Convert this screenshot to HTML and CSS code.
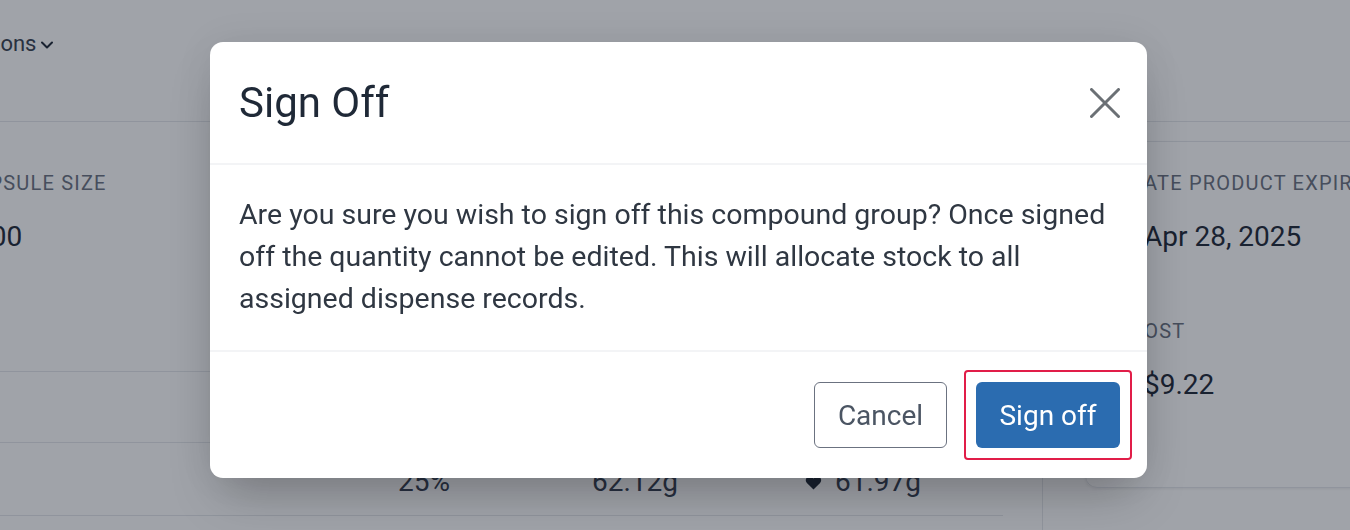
FILE: index.html
```html
<!DOCTYPE html>
<html lang="en">
<head>
<meta charset="utf-8">
<title>Sign Off</title>
<link rel="stylesheet" href="styles.css">
</head>
<body>
<div class="page">
  <header class="topbar">
    <span class="menu">Actions
      <svg class="chev" width="12" height="8" viewBox="0 0 12 8"><path d="M1 1.5 L6 6.5 L11 1.5" fill="none" stroke="currentColor" stroke-width="2" stroke-linecap="round" stroke-linejoin="round"/></svg>
    </span>
  </header>
  <div class="main">
    <section class="content">
      <div class="stats">
        <div class="stat">
          <div class="label">Capsule size</div>
          <div class="value">000</div>
        </div>
      </div>
      <div class="row head"></div>
      <div class="row data">
        <span>25%</span>
        <span>62.12g</span>
        <span class="with-icon">
          <svg width="17" height="17" viewBox="0 0 16 16"><path d="M8 14.5 L1.8 8.4 C0 6.6 0.6 3.2 3.3 2.4 C5.2 1.9 6.9 2.8 8 4.3 C9.1 2.8 10.8 1.9 12.7 2.4 C15.4 3.2 16 6.6 14.2 8.4 Z" fill="currentColor"/></svg>
          61.97g
        </span>
      </div>
    </section>
    <aside class="aside">
      <div class="card">
        <div class="stat">
          <div class="label">Date product expiry</div>
          <div class="value">Apr 28, 2025</div>
        </div>
        <div class="stat">
          <div class="label">Cost</div>
          <div class="value">$9.22</div>
        </div>
      </div>
    </aside>
  </div>
</div>

<div class="backdrop">
  <div class="modal" role="dialog" aria-labelledby="modal-title">
    <div class="modal-header">
      <h2 id="modal-title">Sign Off</h2>
      <button class="close" aria-label="Close">
        <svg width="30" height="30" viewBox="0 0 30 30"><path d="M1.5 1.5 L28.5 28.5 M28.5 1.5 L1.5 28.5" stroke="#6b7075" stroke-width="3" stroke-linecap="round"/></svg>
      </button>
    </div>
    <div class="modal-body">
      <p>Are you sure you wish to sign off this compound group? Once signed off the quantity cannot be edited. This will allocate stock to all assigned dispense records.</p>
    </div>
    <div class="modal-footer">
      <button class="btn btn-outline">Cancel</button>
      <span class="focus-ring"><button class="btn btn-primary">Sign off</button></span>
    </div>
  </div>
</div>
</body>
</html>
```
FILE: styles.css
```css
* { box-sizing: border-box; }

html, body {
  margin: 0;
  height: 530px;
  overflow: hidden;
  background: #ffffff;
  font-family: Roboto, "Liberation Sans", Arial, sans-serif;
}

/* ---------- underlying page ---------- */
.page { width: 1350px; }

.topbar {
  height: 122px;
  border-bottom: 1px solid #e5e7eb;
  padding-top: 31px;
}

.menu {
  display: inline-flex;
  align-items: center;
  gap: 5px;
  margin-left: -38px;
  font-size: 22px;
  line-height: 26px;
  color: #374151;
}

.chev { color: #1f2937; margin-top: 2px; }

.main {
  display: flex;
  height: 408px;
}

.content {
  flex: 0 0 1081px;
  margin-left: -39px;
  padding-right: 39px;
}

.stats {
  height: 250px;
  padding-top: 49px;
  border-bottom: 1px solid #e5e7eb;
}

.stat .label {
  font-size: 20px;
  line-height: 24px;
  letter-spacing: 1.2px;
  text-transform: uppercase;
  color: #6b7280;
  white-space: nowrap;
}

.stat .value {
  margin-top: 24px;
  padding-left: 14px;
  font-size: 28px;
  line-height: 36px;
  color: #1f2937;
  white-space: nowrap;
}

.row { border-bottom: 1px solid #e5e7eb; }
.row.head { height: 71px; }
.row.data {
  height: 73px;
  display: grid;
  grid-template-columns: 194px 213px 1fr;
  align-items: center;
  padding: 6px 0 0 437px;
  font-size: 28px;
  line-height: 32px;
  color: #374151;
}

.with-icon {
  display: inline-flex;
  align-items: center;
  gap: 13px;
}

.with-icon svg { color: #1f2937; }

.aside {
  flex: 1;
  border-left: 1px solid #e5e7eb;
  padding: 19px 0 0 42px;
}

.card {
  width: 400px;
  height: 347px;
  border: 1px solid #e5e7eb;
  border-radius: 12px;
  box-shadow: 0 1px 3px rgba(0, 0, 0, 0.08);
  padding: 29px 0 0 44px;
}

.card .stat + .stat { margin-top: 64px; }

/* ---------- modal ---------- */
.backdrop {
  position: fixed;
  inset: 0;
  background: rgba(17, 24, 39, 0.4);
  padding: 42px 0 0 210px;
}

.modal {
  width: 937px;
  background: #ffffff;
  border-radius: 13px;
  box-shadow: 0 25px 50px -12px rgba(0, 0, 0, 0.25), 0 0 40px rgba(0, 0, 0, 0.06);
}

.modal-header {
  height: 123px;
  display: flex;
  align-items: center;
  justify-content: space-between;
  padding: 0 27px 0 29px;
  border-bottom: 2px solid #f3f4f6;
}

.modal-header h2 {
  margin: 0;
  font-size: 42px;
  font-weight: 400;
  line-height: 50px;
  color: #1f2937;
}

.close {
  width: 30px;
  height: 30px;
  padding: 0;
  border: 0;
  background: none;
  display: flex;
}

.modal-body {
  padding: 29px 35px 30px 29px;
  border-bottom: 2px solid #f3f4f6;
}

.modal-body p {
  margin: 0;
  font-size: 28.5px;
  line-height: 42px;
  color: #2f3742;
}

.modal-footer {
  height: 126px;
  display: flex;
  align-items: center;
  justify-content: flex-end;
  gap: 17px;
  padding: 0 15px 0 0;
}

.btn {
  height: 66px;
  font-family: inherit;
  font-size: 28px;
  font-weight: 400;
  border-radius: 6px;
  padding: 0;
  cursor: pointer;
}

.btn-outline {
  width: 133px;
  background: #ffffff;
  border: 1.5px solid #6b7280;
  color: #4b5563;
}

.focus-ring {
  display: inline-flex;
  padding: 10px;
  border: 2px solid #e11d48;
  border-radius: 4px;
}

.btn-primary {
  width: 144px;
  background: #2b6cb0;
  border: 0;
  color: #ffffff;
}
```
